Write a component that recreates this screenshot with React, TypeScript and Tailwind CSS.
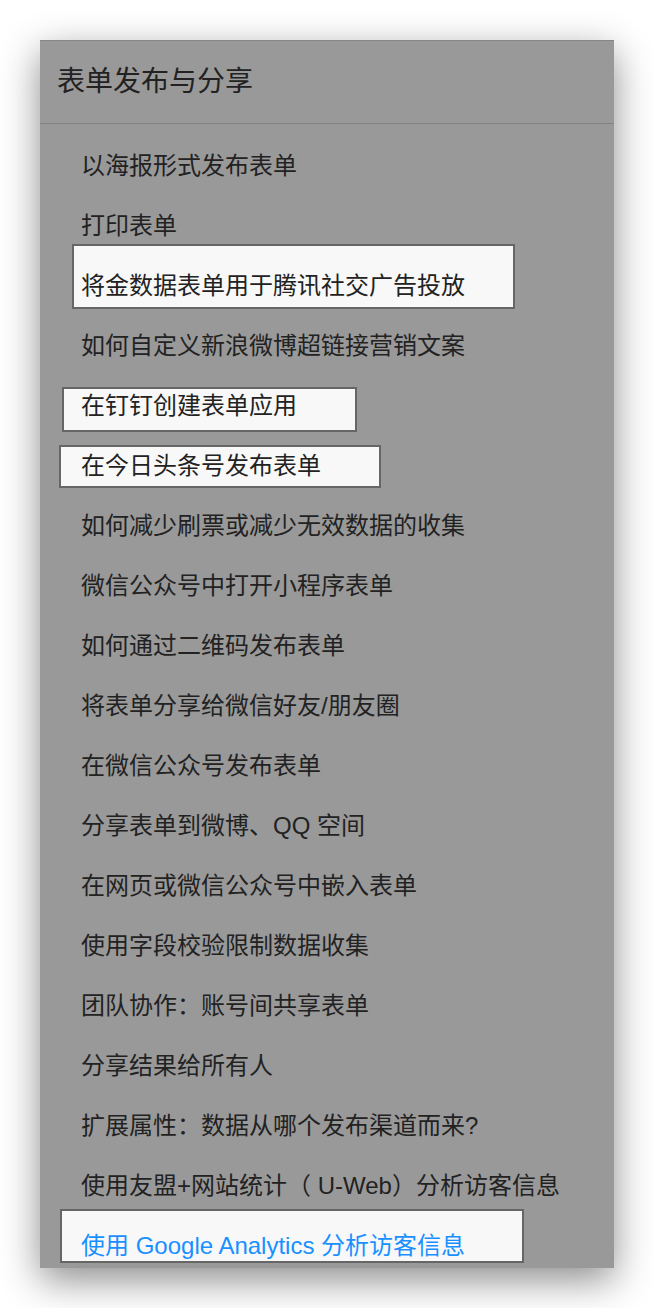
import React from "react"

type Item = {
  label: string
  box?: { top: number; left: number; width: number; height: number }
  link?: boolean
}

const ITEMS: Item[] = [
  { label: "以海报形式发布表单" },
  { label: "打印表单" },
  { label: "将金数据表单用于腾讯社交广告投放", box: { top: -12, left: 32, width: 443, height: 65 } },
  { label: "如何自定义新浪微博超链接营销文案" },
  { label: "在钉钉创建表单应用", box: { top: 11, left: 22, width: 295, height: 45 } },
  { label: "在今日头条号发布表单", box: { top: 9, left: 19, width: 322, height: 43 } },
  { label: "如何减少刷票或减少无效数据的收集" },
  { label: "微信公众号中打开小程序表单" },
  { label: "如何通过二维码发布表单" },
  { label: "将表单分享给微信好友/朋友圈" },
  { label: "在微信公众号发布表单" },
  { label: "分享表单到微博、QQ 空间" },
  { label: "在网页或微信公众号中嵌入表单" },
  { label: "使用字段校验限制数据收集" },
  { label: "团队协作：账号间共享表单" },
  { label: "分享结果给所有人" },
  { label: "扩展属性：数据从哪个发布渠道而来?" },
  { label: "使用友盟+网站统计（ U-Web）分析访客信息" },
  { label: "使用 Google Analytics 分析访客信息", box: { top: -7, left: 20, width: 464, height: 54 }, link: true },
]

export default function App() {
  return (
    <div
      className="min-h-[1308px] w-[654px] bg-white pt-10 px-10"
      style={{ fontFamily: '"Liberation Sans", "Noto Sans CJK SC", sans-serif' }}
    >
      <div className="h-[1228px] w-[574px] overflow-hidden border-t border-[#878787] bg-[#999999] shadow-[0_12px_36px_rgba(0,0,0,0.45)]">
        {/* header */}
        <div className="flex h-[83px] items-center border-b border-[#828282] pl-[17px] text-[28px] text-[#222]">
          表单发布与分享
        </div>

        {/* list */}
        <div className="pt-[12px]">
          {ITEMS.map((item) => (
            <div key={item.label} className="relative flex h-[60px] items-center pl-[41px]">
              {item.box && (
                <div
                  className="absolute border-2 border-[#666] bg-[#f8f8f8]"
                  style={{
                    top: item.box.top,
                    left: item.box.left,
                    width: item.box.width,
                    height: item.box.height,
                  }}
                />
              )}
              <span
                className={
                  "relative whitespace-nowrap text-[24px] leading-none " +
                  (item.link ? "text-[#1890ff]" : "text-[#222]")
                }
              >
                {item.label}
              </span>
            </div>
          ))}
        </div>
      </div>
    </div>
  )
}
